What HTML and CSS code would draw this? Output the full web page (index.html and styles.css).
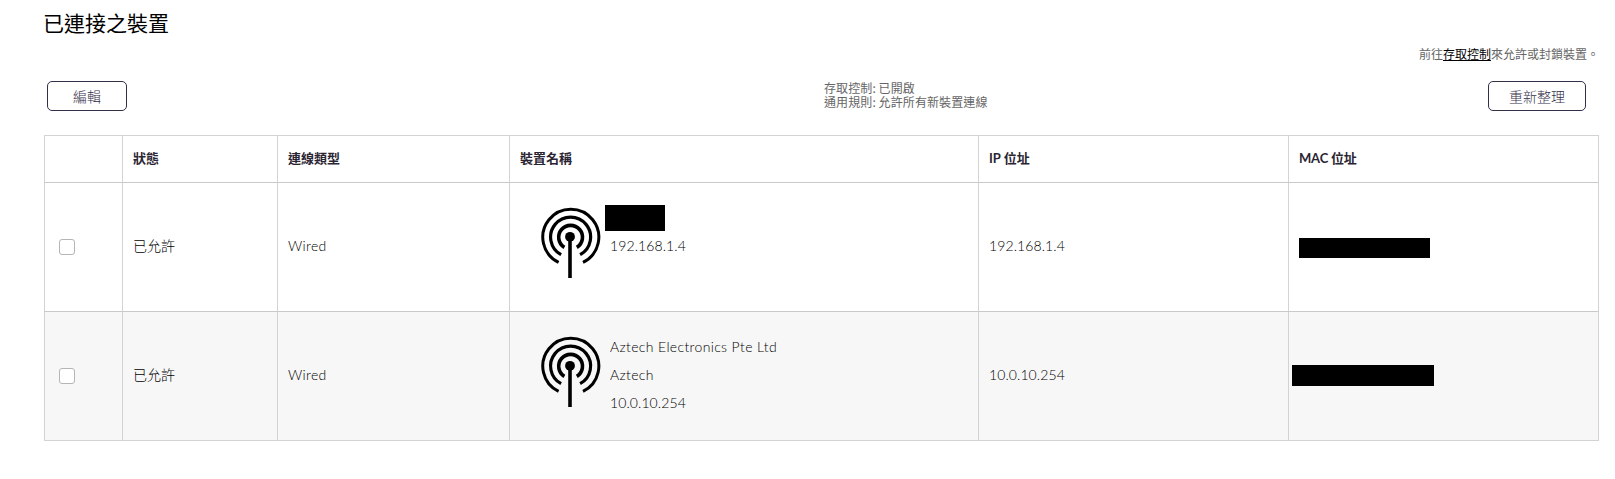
FILE: index.html
```html
<!DOCTYPE html>
<html lang="zh-Hant">
<head>
<meta charset="utf-8">
<title>已連接之裝置</title>
<link rel="stylesheet" href="styles.css">
</head>
<body>
<svg class="defs" width="0" height="0" aria-hidden="true">
  <symbol id="antenna" viewBox="0 0 62 72">
    <g fill="none" stroke="#000">
      <path stroke-width="3" d="M18.6 55.4A28 28 0 1 1 43 55.4"/>
      <path stroke-width="3.2" d="M21.1 47.7A20 20 0 1 1 40.1 47.7"/>
      <path stroke-width="3.6" d="M24.4 40.4A11.9 11.9 0 1 1 36.8 40.4"/>
      <path stroke-width="3.6" d="M30 30V71"/>
    </g>
    <circle cx="30" cy="29.8" r="4.9"/>
  </symbol>
</svg>
<main class="page">
  <h1 class="title">已連接之裝置</h1>
  <p class="hint">前往<a class="hint-link" href="#">存取控制</a>來允許或封鎖裝置。</p>
  <div class="toolbar">
    <button class="btn btn-edit">編輯</button>
    <div class="summary"><p>存取控制: 已開啟</p><p>通用規則: 允許所有新裝置連線</p></div>
    <button class="btn btn-refresh">重新整理</button>
  </div>
  <div class="table">
    <div class="row head">
      <div class="cell"></div>
      <div class="cell">狀態</div>
      <div class="cell">連線類型</div>
      <div class="cell">裝置名稱</div>
      <div class="cell">IP 位址</div>
      <div class="cell mac-label">MAC 位址</div>
    </div>
    <div class="row">
      <div class="cell check"><input class="box" type="checkbox"></div>
      <div class="cell status">已允許</div>
      <div class="cell wired">Wired</div>
      <div class="cell device">
        <svg class="antenna"><use href="#antenna"/></svg>
        <div class="names"><p class="hidden-name"></p><p class="num">192.168.1.4</p></div>
      </div>
      <div class="cell num">192.168.1.4</div>
      <div class="cell"><span class="hidden-mac"></span></div>
    </div>
    <div class="row alt">
      <div class="cell check"><input class="box" type="checkbox"></div>
      <div class="cell status">已允許</div>
      <div class="cell wired">Wired</div>
      <div class="cell device">
        <svg class="antenna"><use href="#antenna"/></svg>
        <div class="names"><p class="vendor">Aztech Electronics Pte Ltd</p><p class="brand">Aztech</p><p class="num">10.0.10.254</p></div>
      </div>
      <div class="cell num">10.0.10.254</div>
      <div class="cell"><span class="hidden-mac hidden-mac-wide"></span></div>
    </div>
  </div>
</main>
</body>
</html>
```
FILE: styles.css
```css
* { box-sizing: border-box; }
body {
  margin: 0;
  background: #fff;
  color: #2b2533;
  font-family: Lato, "Noto Sans CJK TC", sans-serif;
}
p { margin: 0; }
.defs { display: block; }
.page { padding: 6px 16px 0 43px; }
.title {
  margin: 0;
  height: 32px;
  font: 400 21px/32px "Noto Sans CJK TC", sans-serif;
  color: #000;
}
.hint {
  height: 20px;
  margin-top: 6px;
  font: 400 12px/20px "Noto Sans CJK TC", sans-serif;
  color: #666;
  text-align: right;
  white-space: nowrap;
}
.hint-link { color: #000; }
.toolbar {
  display: grid;
  grid-template-columns: 781px 1fr 98px;
  align-items: start;
  padding: 0 13px 0 4px;
  margin-top: 17px;
  height: 54px;
}
.btn {
  height: 30px;
  padding: 0;
  border: 1px solid #352e49;
  border-radius: 5px;
  background: #fff;
  color: #352e49;
  font: 300 14px/28px "Noto Sans CJK TC", sans-serif;
}
.btn-edit { width: 80px; }
.btn-refresh { width: 98px; }
.summary {
  font: 400 12px/14px "Noto Sans CJK TC", sans-serif;
  letter-spacing: 0.1px;
  color: #666;
}
.summary p { margin-left: -4px; white-space: nowrap; }
.table {
  width: 1555px;
  margin-left: 1px;
  border: 1px solid #d3d3d3;
  border-left: 0;
}
.row {
  display: grid;
  grid-template-columns: 78px 155px 232px 469px 310px 310px;
  height: 129px;
  border-top: 1px solid #c9c9c9;
}
.head {
  height: 46px;
  border-top: 0;
  font-weight: 700;
}
.alt { background: #f7f7f7; }
.cell {
  display: flex;
  align-items: center;
  border-left: 1px solid #d3d3d3;
  padding: 0 0 1px 10px;
  font-size: 14px;
  line-height: 28px;
}
.head .cell { font-size: 13px; padding-bottom: 2px; }
.head .mac-label { letter-spacing: -0.2px; }
.status { font-weight: 300; color: #000; padding-bottom: 3px; }
.check { padding: 0 0 0 14px; }
.box {
  appearance: none;
  width: 16px;
  height: 16px;
  margin: 0;
  border: 1px solid #b5b5b5;
  border-radius: 3px;
  background: #fff;
}
.device {
  align-items: flex-start;
  padding: 21px 0 0 30px;
}
.antenna { width: 62px; height: 72px; margin-top: 3px; }
.names { padding-left: 8px; }
.vendor, .brand, .num, .wired {
  font-size: 14px;
  line-height: 28px;
  font-weight: 300;
  letter-spacing: 0.35px;
  color: #000;
  white-space: nowrap;
}
.cell.num, .cell.wired { padding-bottom: 3px; }
.num { letter-spacing: 0.1px; }
.hidden-name {
  width: 60px;
  height: 26px;
  margin: 1px 0 1px -5px;
  background: #000;
}
.hidden-mac {
  width: 131px;
  height: 20px;
  margin-top: 2px;
  background: #000;
}
.hidden-mac-wide {
  width: 142px;
  height: 21px;
  margin: 0 0 0 -7px;
}
```
